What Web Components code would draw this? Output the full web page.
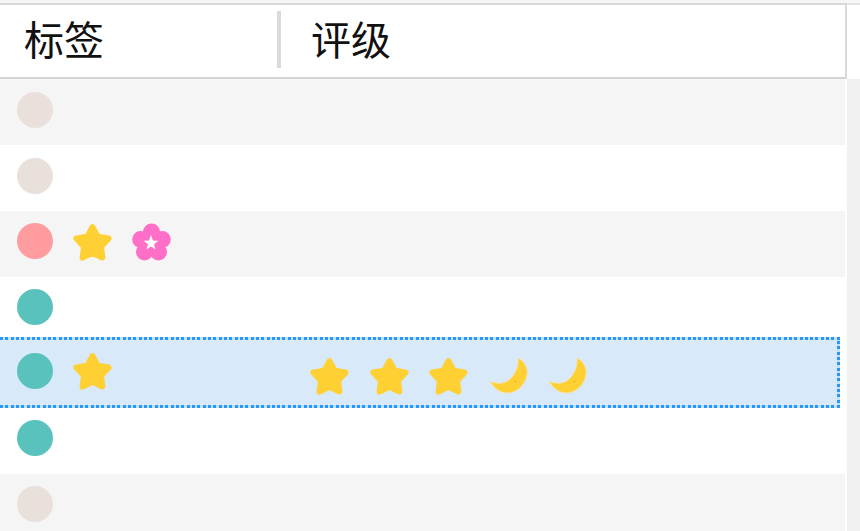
<!DOCTYPE html>
<html lang="zh">
<head>
<meta charset="utf-8">
<title>标签</title>
<style>
    html, body { margin: 0; height: 531px; overflow: hidden; background: #fff; }
</style>
</head>
<body>
<list-view>
    <list-row style="--pad:13px" shade>
        <tag-dot slot="tags" color="#e9e0db"></tag-dot>
    </list-row>
    <list-row style="--pad:13px">
        <tag-dot slot="tags" color="#e9e0db"></tag-dot>
    </list-row>
    <list-row shade>
        <tag-dot slot="tags" color="#ff9c9f"></tag-dot>
        <mark-icon slot="tags" kind="star"></mark-icon>
        <mark-icon slot="tags" kind="flower"></mark-icon>
    </list-row>
    <list-row style="height:60px">
        <tag-dot slot="tags" color="#5ac2bd"></tag-dot>
    </list-row>
    <list-row selected style="--pad:16px; height:71px">
        <tag-dot slot="tags" color="#5ac2bd"></tag-dot>
        <mark-icon slot="tags" kind="star" style="margin-top:-1px"></mark-icon>
        <mark-icon kind="star"></mark-icon>
        <mark-icon kind="star"></mark-icon>
        <mark-icon kind="star"></mark-icon>
        <mark-icon kind="moon"></mark-icon>
        <mark-icon kind="moon"></mark-icon>
    </list-row>
    <list-row>
        <tag-dot slot="tags" color="#5ac2bd"></tag-dot>
    </list-row>
    <list-row shade>
        <tag-dot slot="tags" color="#e9e0db"></tag-dot>
    </list-row>
</list-view>

<script>
class ListView extends HTMLElement {
    connectedCallback() {
        const shadow = this.attachShadow({ mode: 'open' });
        shadow.innerHTML = `
            <style>
                :host {
                    display: block;
                    height: 531px;
                    font-family: "Noto Sans CJK SC", "Liberation Sans", sans-serif;
                    color: #111;
                }
                .top {
                    height: 3px;
                    background: #f6f6f6;
                }
                .head {
                    box-sizing: border-box;
                    height: 76px;
                    width: 847px;
                    display: grid;
                    grid-template-columns: 277px 1fr;
                    align-items: start;
                    padding-top: 6px;
                    border-top: 2px solid #d9d9d9;
                    border-right: 2px solid #d9d9d9;
                    border-bottom: 2px solid #d4d4d4;
                    font-size: 40px;
                    line-height: 54px;
                }
                .head-line {
                    position: absolute;
                    left: 847px;
                    top: 3px;
                    right: 0;
                    height: 2px;
                    background: #e4e4e4;
                }
                .cell {
                    height: 57px;
                    padding-left: 24px;
                }
                .cell + .cell {
                    border-left: 4px solid #dadada;
                    padding-left: 30px;
                }
                .body {
                    display: flex;
                    height: 452px;
                }
                .rows {
                    width: 845px;
                    flex: none;
                }
                .bar {
                    margin-left: 2px;
                    flex: 1;
                    background: #f0f0f0;
                }
            </style>
            <div class="top"></div>
            <div class="head-line"></div>
            <div class="head">
                <div class="cell">标签</div>
                <div class="cell">评级</div>
            </div>
            <div class="body">
                <div class="rows"><slot></slot></div>
                <div class="bar"></div>
            </div>
        `;
    }
}

class ListRow extends HTMLElement {
    connectedCallback() {
        const shadow = this.attachShadow({ mode: 'open' });
        shadow.innerHTML = `
            <style>
                :host {
                    display: grid;
                    grid-template-columns: 282px 1fr;
                    height: 66px;
                    box-sizing: border-box;
                    overflow: hidden;
                }
                :host([shade]) {
                    background: #f5f5f5;
                }
                :host([selected]) {
                    width: 840px;
                    background-color: #d8e9fa;
                    background-image:
                        repeating-linear-gradient(90deg, #2a96f5 0 3px, #c4e0f8 3px 5.33px),
                        repeating-linear-gradient(90deg, #2a96f5 0 3px, #c4e0f8 3px 5.33px),
                        repeating-linear-gradient(0deg, #2a96f5 0 3px, #c4e0f8 3px 5.33px);
                    background-size: 100% 3px, 100% 3px, 3px 100%;
                    background-position: 0 0, 0 100%, 100% 0;
                    background-repeat: no-repeat;
                }
                .tags, .rates {
                    display: flex;
                    align-items: flex-start;
                    padding-top: var(--pad, 12px);
                }
                .tags {
                    padding-left: 17px;
                    gap: 20px;
                }
                .rates {
                    padding-left: 28px;
                    padding-top: 20px;
                    gap: 20.5px;
                }
            </style>
            <div class="tags"><slot name="tags"></slot></div>
            <div class="rates"><slot></slot></div>
        `;
    }
}

class TagDot extends HTMLElement {
    connectedCallback() {
        const shadow = this.attachShadow({ mode: 'open' });
        shadow.innerHTML = `
            <style>
                :host {
                    display: block;
                    width: 36px;
                    height: 36px;
                    border-radius: 50%;
                    background: ${this.getAttribute('color')};
                    filter: blur(0.4px);
                }
            </style>
        `;
    }
}

const STAR = 'M19.5 4.2 24.7 13.6 35.6 15.5 28 23.6 29.4 34.6 19.5 29.9 9.6 34.6 11 23.6 3.4 15.5 14.3 13.6Z';

const ICONS = {
    star: `<path d="${STAR}" fill="#ffd033" stroke="#ffd033" stroke-width="6" stroke-linejoin="round"/>`,
    flower: `
        <g fill="#ff6fc8">
            <circle cx="19.5" cy="9" r="8.5"/>
            <circle cx="30.3" cy="16.6" r="8.5"/>
            <circle cx="26.5" cy="29" r="8.5"/>
            <circle cx="12.5" cy="29" r="8.5"/>
            <circle cx="8.7" cy="16.6" r="8.5"/>
            <circle cx="19.5" cy="20" r="10"/>
        </g>
        <path d="M19 12 20.9 17.4 26.3 17.8 22 21.2 23.5 26.5 19 23.4 14.5 26.5 16 21.2 11.7 17.8 17.1 17.4Z" fill="#fff"/>
    `,
    moon: `
        <path d="M29 1C36 4 39 12 38 18C36 29 27 36 18 36C11 36 5 31 1 24.5C8 27 15 27 20 23C26 18 30 9 29 1Z" fill="#ffd033" stroke="#f7e2a0" stroke-width="1"/>
        <rect x="26" y="24" width="1" height="1" fill="#d08a20"/>
    `
};

class MarkIcon extends HTMLElement {
    connectedCallback() {
        const shadow = this.attachShadow({ mode: 'open' });
        shadow.innerHTML = `
            <style>
                :host {
                    display: block;
                    width: 39px;
                    height: 39px;
                    filter: blur(0.4px);
                }
                svg {
                    display: block;
                }
            </style>
            <svg width="39" height="39" viewBox="0 0 39 39">${ICONS[this.getAttribute('kind')]}</svg>
        `;
    }
}

customElements.define('list-view', ListView);
customElements.define('list-row', ListRow);
customElements.define('tag-dot', TagDot);
customElements.define('mark-icon', MarkIcon);
</script>
</body>
</html>
